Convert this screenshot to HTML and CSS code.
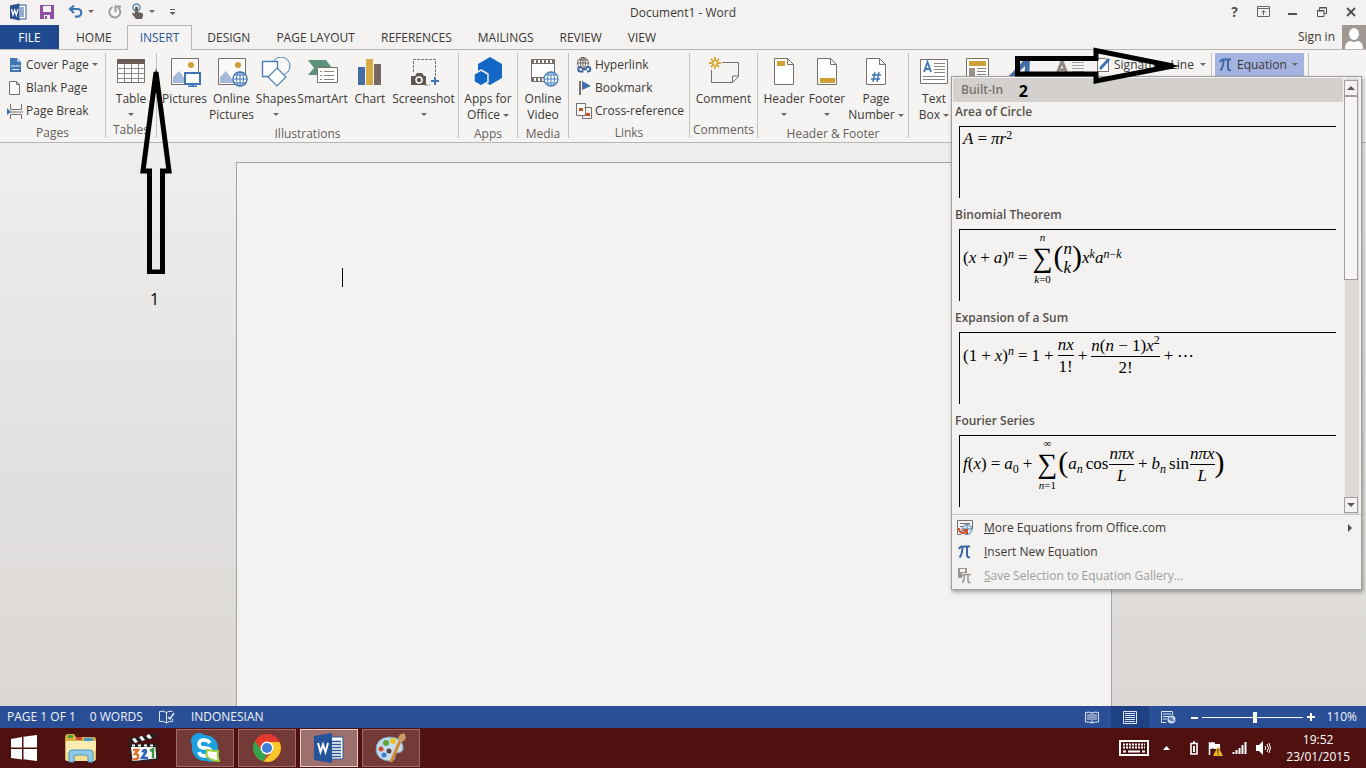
FILE: index.html
```html
<!DOCTYPE html>
<html lang="en">
<head>
  <meta charset="UTF-8" />
  <meta name="viewport" content="width=device-width, initial-scale=1.0" />
  <title>Document1 - Word</title>
  <link rel="stylesheet" href="styles.css">
</head>
<body>
  <header class="titlebar">
    <div class="quick">
      <svg class="word-logo" width="18" height="18" viewBox="0 0 18 18"><path d="M9 2h8v14H9z" fill="#fff" stroke="#2b579a"/><path d="M11 5h4M11 7h4M11 9h4M11 11h4M11 13h4" stroke="#2b579a"/><path d="M1 2.500 10.500.5v17L1 15.500z" fill="#2b4f8f"/><path d="M2.500 6 4 12l1.700-5L7.300 12 9 6" fill="none" stroke="#fff" stroke-width="1.300"/></svg>
      <button class="q-save" aria-label="Save"><svg width="14" height="14" viewBox="0 0 14 14"><path d="M0 0h14v14H0z" fill="#8d4fa0"/><path d="M3 1h8v6H3zM4 10h6v4H4z" fill="#f3f2f0"/><path d="M5 11h2v3H5z" fill="#8d4fa0"/></svg></button>
      <button class="q-undo" aria-label="Undo"><svg width="15" height="13" viewBox="0 0 15 13"><path d="M2 4h7.500a3.800 3.800 0 0 1 0 7.600H7M6 .5 2 4l4 4" fill="none" stroke="#3f74b5" stroke-width="2.200"/></svg><i class="caret"></i></button>
      <button class="q-redo" aria-label="Repeat"><svg width="14" height="14" viewBox="0 0 14 14"><path d="M4.500 2A5.500 5.500 0 1 0 10 2.500M7.500 7V1.500H13" fill="none" stroke="#9b9998" stroke-width="1.800"/></svg></button>
      <button class="q-touch" aria-label="Touch mode"><svg width="13" height="17" viewBox="0 0 13 17"><circle cx="5.500" cy="4.500" r="3.500" fill="none" stroke="#5b87b8" stroke-width="1.500"/><path d="M4 4.500q1.500-2 3 0V9l4 1q1.500.5 1 2.500l-1 3.500H5L1 11q.5-2 3-.5z" fill="#6b625e"/></svg><i class="caret"></i></button>
      <button class="q-more" aria-label="Customize"><svg width="7" height="6" viewBox="0 0 7 6"><path d="M1 .5h5" stroke="#5f5a57"/><path d="M.5 3h6l-3 3z" fill="#5f5a57"/></svg></button>
    </div>
    <h1>Document1 - Word</h1>
    <div class="window-buttons">
      <button class="help">?</button>
      <button aria-label="Ribbon display"><svg width="13" height="11" viewBox="0 0 13 11"><path d="M.5.500h12v10H.5zM.5 2.500h12M6.500 9V5M4.500 6.500l2-2 2 2" fill="none" stroke="#6b6663"/></svg></button>
      <button aria-label="Minimize"><svg width="9" height="11" viewBox="0 0 9 11"><path d="M0 8h9" stroke="#55504d" stroke-width="2"/></svg></button>
      <button aria-label="Restore"><svg width="10" height="10" viewBox="0 0 10 10"><path d="M2.500 3V.5h7v6H7M.5 3.500H7v6H.5zM.5 4h6.500M2.500 1h7" fill="none" stroke="#55504d"/></svg></button>
      <button aria-label="Close"><svg width="10" height="10" viewBox="0 0 10 10"><path d="m1 1 8 8M9 1 1 9" stroke="#55504d" stroke-width="1.800"/></svg></button>
    </div>
  </header>

  <nav class="tabs">
    <button class="file">FILE</button>
    <button>HOME</button>
    <button class="active">INSERT</button>
    <button>DESIGN</button>
    <button>PAGE LAYOUT</button>
    <button>REFERENCES</button>
    <button>MAILINGS</button>
    <button>REVIEW</button>
    <button>VIEW</button>
    <a class="sign-in" href="#">Sign in</a>
    <svg class="avatar" width="24" height="24" viewBox="0 0 24 24"><path d="M0 0h24v24H0z" fill="#a19894"/><ellipse cx="12" cy="9" rx="5" ry="6" fill="#fff"/><path d="M3 24q0-8 6-8 3 2 6 0 6 0 6 8z" fill="#fff"/></svg>
  </nav>

  <section class="ribbon">
    <div class="group pages">
      <div class="rows">
        <button><svg width="16" height="16" viewBox="0 0 16 16"><path d="M3 1h7l4 4v10H3z" fill="#3f74b5"/><path d="M10 1v4h4" fill="#a9c3e2"/><path d="m4 8 1.500 2L7 8l1.500 2L10 8l1.500 2L13 8M5 12.500h7" fill="none" stroke="#dbe7f4"/></svg>Cover Page<i class="caret"></i></button>
        <button><svg width="16" height="16" viewBox="0 0 16 16"><path d="M2.500 1.500h7l3 3v10h-10zM9.500 1.500v3h3" fill="#fff" stroke="#77706c"/></svg>Blank Page</button>
        <button><svg width="16" height="16" viewBox="0 0 16 16"><path d="M3.500 1v5.500h11V1M3.500 16v-4.500h11V16M3 9h13" fill="none" stroke="#77706c"/><path d="m0 5 4 4-4 3z" fill="#3f74b5"/></svg>Page Break</button>
      </div>
      <p>Pages</p>
    </div>

    <div class="group tables">
      <div class="tiles">
        <button><svg width="30" height="30" viewBox="0 0 30 30"><path d="M1.500 2.500h27v23h-27z" fill="#fff" stroke="#77706c"/><path d="M1 2h28v5H1z" fill="#6b5c57"/><path d="M1 11.500h28M1 16.500h28M1 21.500h28M8.500 7v18M15.500 7v18M22.500 7v18" stroke="#8b8480"/></svg><span>Table</span><i class="caret"></i></button>
      </div>
      <p>Tables</p>
    </div>

    <div class="group illustrations">
      <div class="tiles">
        <button><svg width="32" height="30" viewBox="0 0 32 30"><path d="M2.500 1.500h27v26h-27z" fill="#fbfaf9" stroke="#77706c"/><circle cx="22" cy="8" r="3" fill="#cf9f35"/><path d="M4 26v-6l6-6 9 12z" fill="#a6b8d8"/><path d="M16 16h15v11H16z" fill="#fff" stroke="#3f74b5" stroke-width="2"/><path d="M23.500 27v2M19 29.500h9" stroke="#3f74b5" stroke-width="2"/></svg><span>Pictures</span></button>
        <button><svg width="32" height="30" viewBox="0 0 32 30"><path d="M2.500 1.500h27v26h-27z" fill="#fbfaf9" stroke="#77706c"/><circle cx="22" cy="8" r="3" fill="#cf9f35"/><path d="M4 26v-6l6-6 9 12z" fill="#a6b8d8"/><circle cx="24" cy="22" r="7" fill="#fff" stroke="#3f74b5" stroke-width="1.400"/><path d="M17 22h14M24 15v14M18.500 18h11M18.500 26h11" stroke="#3f74b5"/><ellipse cx="24" cy="22" rx="3.500" ry="7" fill="none" stroke="#3f74b5"/></svg><span>Online</span><span>Pictures</span></button>
        <button><svg width="30" height="30" viewBox="0 0 30 30"><circle cx="20" cy="9" r="9" fill="#f8f7f6" stroke="#4d80b3"/><path d="M1.500 4.500h15v15h-15z" fill="#fff" stroke="#4d80b3" stroke-width="1.400"/><path d="m16 11 9 9-9 9-9-9z" fill="#fff" stroke="#4d80b3" stroke-width="1.200"/></svg><span>Shapes</span><i class="caret"></i></button>
        <button><svg width="30" height="30" viewBox="0 0 30 30"><path d="M0 3h18l6 8-6 7H0l6-7z" fill="#5b9279"/><path d="M9.500 10.500h20v15h-20z" fill="#fff" stroke="#77706c"/><path d="M12 14.500h2m2 0h10M12 18.500h2m2 0h10M12 22.500h2m2 0h10" stroke="#8b8480"/></svg><span>SmartArt</span></button>
        <button><svg width="30" height="30" viewBox="0 0 30 30"><path d="M3 10h7v18H3z" fill="#446da5"/><path d="M11 2h7v26h-7z" fill="#d9ab45"/><path d="M19 7h7v21h-7z" fill="#766762"/></svg><span>Chart</span></button>
        <button><svg width="32" height="30" viewBox="0 0 32 30"><path d="M5.500 15V2.500h22V19" fill="none" stroke="#77706c" stroke-dasharray="3 1"/><path d="M17 28h5" stroke="#77706c" stroke-dasharray="3 1"/><path d="M3 19h4l2-3h5l2 3h2v9H3z" fill="#5f5551"/><circle cx="11" cy="23" r="3" fill="none" stroke="#fff" stroke-width="1.500"/><path d="M23 24h8M27 20v8" stroke="#3f74b5" stroke-width="2"/></svg><span>Screenshot</span><i class="caret"></i></button>
      </div>
      <p>Illustrations</p>
    </div>

    <div class="group apps">
      <div class="tiles">
        <button><svg width="30" height="30" viewBox="0 0 30 30"><path d="m17 0 12 7v14l-12 7-12-7V7z" fill="#1368c5"/><path d="m8 13 7 4v8l-7 4-7-4v-8z" fill="#1368c5" stroke="#f5f4f3" stroke-width="1.500"/></svg><span>Apps for</span><span>Office<i class="caret"></i></span></button>
      </div>
      <p>Apps</p>
    </div>

    <div class="group media">
      <div class="tiles">
        <button><svg width="32" height="30" viewBox="0 0 32 30"><path d="M4.500 2.500h23v22h-23z" fill="#fff" stroke="#77706c"/><path d="M5 4.500h22M5 22.500h14" stroke="#77706c" stroke-width="3" stroke-dasharray="2 2"/><path d="M5 6.500h22M5 20.500h14" stroke="#77706c"/><circle cx="24" cy="22" r="7" fill="#fff" stroke="#4b83bd" stroke-width="1.400"/><path d="M17 22h14M24 15v14M18.500 18h11M18.500 26h11" stroke="#4b83bd"/><ellipse cx="24" cy="22" rx="3.500" ry="7" fill="none" stroke="#4b83bd"/></svg><span>Online</span><span>Video</span></button>
      </div>
      <p>Media</p>
    </div>

    <div class="group links">
      <div class="rows">
        <button><svg width="16" height="16" viewBox="0 0 16 16"><circle cx="7" cy="6" r="5.500" fill="#fff" stroke="#6b625e"/><path d="M1.500 6h11M7 .5v11M2.500 3h9" stroke="#6b625e"/><ellipse cx="7" cy="6" rx="2.500" ry="5.500" fill="none" stroke="#6b625e"/><path d="M5.500 10h-1a2.200 2.200 0 0 0 0 4.500h3M10 10h2a2.200 2.200 0 0 1 0 4.500h-1M6 12.300h5" stroke="#3b66a8" stroke-width="2" fill="none"/></svg>Hyperlink</button>
        <button><svg width="16" height="16" viewBox="0 0 16 16"><path d="M4 1v14" stroke="#77706c" stroke-width="2"/><path d="m6 1 9 5-9 4z" fill="#446da5"/></svg>Bookmark</button>
        <button><svg width="16" height="16" viewBox="0 0 16 16"><path d="M.5.500h9v12h-9z" fill="#fff" stroke="#77706c"/><path d="M10 4.500h5.500v11h-9V13M8.500 4.500h1" fill="none" stroke="#77706c"/><path d="M3 5h4v3H3zM10 10h4v3h-4z" fill="#c94f25"/></svg>Cross-reference</button>
      </div>
      <p>Links</p>
    </div>

    <div class="group comments">
      <div class="tiles">
        <button><svg width="32" height="30" viewBox="0 0 32 30"><path d="M14 5.500h16.500v14l-6 6h-21V13M30.500 19h-6v6" fill="none" stroke="#77706c"/><path d="M7 0v4m0 4v4M1 6h4m4 0h4M3 2l3 3m2 2 3 3m0-8L8 5M6 7l-3 3" stroke="#d9a636" stroke-width="1.800"/></svg><span>Comment</span></button>
      </div>
      <p>Comments</p>
    </div>

    <div class="group header-footer">
      <div class="tiles">
        <button><svg width="22" height="30" viewBox="0 0 22 30"><path d="M1.500 1.500h13l6 6v20h-19zM14.500 1.500v6h6" fill="#fff" stroke="#77706c"/><path d="M4 4h8v5H4z" fill="#cf9f35"/></svg><span>Header</span><i class="caret"></i></button>
        <button><svg width="22" height="30" viewBox="0 0 22 30"><path d="M1.500 1.500h13l6 6v20h-19zM14.500 1.500v6h6" fill="#fff" stroke="#77706c"/><path d="M4 21h15v5H4z" fill="#cf9f35"/></svg><span>Footer</span><i class="caret"></i></button>
        <button><svg width="22" height="30" viewBox="0 0 22 30"><path d="M1.500 1.500h13l6 6v20h-19zM14.500 1.500v6h6" fill="#fff" stroke="#77706c"/><path d="m10 15-2 10m6-10-2 10M7 18h9M6 22h9" stroke="#3f74b5" stroke-width="1.400"/></svg><span>Page</span><span>Number<i class="caret"></i></span></button>
      </div>
      <p>Header &amp; Footer</p>
    </div>

    <div class="group text">
      <div class="tiles">
        <button><svg width="30" height="30" viewBox="0 0 30 30"><path d="M1.500 2.500h27v24h-27z" fill="#fff" stroke="#77706c"/><path d="m5 15 3.500-10L12 15M6 12h5" fill="none" stroke="#3f74b5" stroke-width="1.800"/><path d="M15 6.500h11M15 9.500h11M15 12.500h11M15 15.500h11M4 19.500h22M4 22.500h22" stroke="#8b8480"/></svg><span>Text</span><span>Box<i class="caret"></i></span></button>
        <button aria-label="Quick Parts"><svg width="24" height="30" viewBox="0 0 24 30"><path d="M1.500 1.500h22v27h-22z" fill="#fff" stroke="#77706c"/><path d="M4 4h17v5H4z" fill="#cf9f35"/><path d="M4 11h6v8H4z" fill="#9b928e"/><path d="M12 11.500h9M12 14.500h9M12 17.500h9" stroke="#8b8480"/></svg></button>
        <button aria-label="WordArt"><svg width="24" height="30" viewBox="0 0 24 30"><path d="M0 20 17 2h5l-1 22h-5l1-15L6 20z" fill="#446da5"/></svg></button>
        <button aria-label="Drop Cap"><svg width="28" height="30" viewBox="0 0 28 30"><path d="M1 17 6 4l5 13M3 13h7" fill="none" stroke="#8f8784" stroke-width="3"/><path d="M16 5.500h12M16 8.500h12M16 11.500h12M16 14.500h12" stroke="#a8a29f"/></svg></button>
        <div class="rows">
          <button><svg width="16" height="16" viewBox="0 0 16 16"><path d="M2.500 1.500h8l3 3v10h-11z" fill="#fff" stroke="#77706c"/><path d="m5 12 9-10" stroke="#3f74b5" stroke-width="3"/></svg>Signature Line<i class="caret"></i></button>
        </div>
      </div>
    </div>

    <div class="group symbols">
      <div class="rows">
        <button class="open" aria-expanded="true"><svg width="13" height="14" viewBox="0 0 13 14"><path d="M1 4q1-2.500 3-2.500h8M4.500 2q0 7-3 10.500M9 2v8q0 3 3 2" fill="none" stroke="#3c68a8" stroke-width="2"/></svg>Equation<i class="caret"></i></button>
      </div>
    </div>
  </section>

  <main class="workspace">
    <div class="page"><span class="cursor"></span></div>
  </main>

  <footer class="status">
    <span class="st-page">PAGE 1 OF 1</span>
    <span class="st-words">0 WORDS</span>
    <svg class="st-proof" width="16" height="14" viewBox="0 0 16 14"><path d="M7.500 13V2.500q-3-2-7-1v10q4-1 7 1.500 2-2 6-1.500V9M7.500 2.500q2-2 6-1" fill="none" stroke="#dfe6f3"/><path d="m9 7 2 2 4-6" fill="none" stroke="#dfe6f3" stroke-width="1.500"/></svg>
    <span>INDONESIAN</span>
    <div class="views">
      <button aria-label="Read mode"><svg width="14" height="13" viewBox="0 0 14 13"><path d="M7 2v10M.5 1.500Q4 .5 7 2q3-1.500 6.500-.5v9.500Q10 10.500 7 12 4 10.500.5 11z" fill="none" stroke="#dfe6f3"/><path d="M2 4h4M2 6h4M2 8h4M8 4h4M8 6h4M8 8h4" stroke="#dfe6f3"/></svg></button>
      <button class="current" aria-label="Print layout"><svg width="14" height="13" viewBox="0 0 14 13"><path d="M.5.500h13v12H.5z" fill="none" stroke="#dfe6f3"/><path d="M2 2.500h10M2 4.500h10M2 6.500h10M2 8.500h10M2 10.500h10" stroke="#dfe6f3"/></svg></button>
      <button aria-label="Web layout"><svg width="15" height="13" viewBox="0 0 15 13"><path d="M5 11.500H.5V.500h11V4M2 3h8M2 5.500h6M2 8h4" fill="none" stroke="#dfe6f3"/><circle cx="10.500" cy="8.500" r="4" fill="#cbd6ea"/><path d="M8 7h3v2H9zM11 10l2-1" stroke="#2b579a" fill="none"/></svg></button>
    </div>
    <div class="zoom">
      <button aria-label="Zoom out"><svg width="7" height="7" viewBox="0 0 7 7"><path d="M0 4h7" stroke="#fff" stroke-width="2"/></svg></button>
      <input type="range" min="0" max="100" value="52" aria-label="Zoom">
      <button aria-label="Zoom in"><svg width="8" height="8" viewBox="0 0 8 8"><path d="M0 4h8M4 0v8" stroke="#fff" stroke-width="2"/></svg></button>
    </div>
    <span class="percent">110%</span>
  </footer>

  <div class="taskbar">
    <button class="start" aria-label="Start"><svg width="28" height="26" viewBox="0 0 28 26"><path d="m1 4 11-2v10.500H1zM13.500 1.800 27 0v12.500H13.500zM1 14h11v10.500L1 23zM13.500 14H27v12l-13.500-1.700z" fill="#fff"/></svg></button>
    <button aria-label="Explorer"><svg width="34" height="30" viewBox="0 0 34 30"><path d="M1 5q0-4 3-4h6l2 3h18q2 0 2 3v20H1z" fill="#d6b046"/><path d="M4 2h5v3H4z" fill="#4d9a3f"/><path d="M12 4h6v3h-6z" fill="#c8463a"/><path d="M20 5h9v3h-9z" fill="#4795c9"/><path d="M2 8h30l-1 20H2z" fill="#f3df8f"/><path d="M2 8h30l-.5 9L2 20z" fill="#f9ecb0"/><path d="M5 29V20q0-3 3-3h18q3 0 3 3v9h-5v-5q0-2-2-2H12q-2 0-2 2v5z" fill="#8fcbe8" stroke="#4d93bd"/></svg></button>
    <button aria-label="Media Player Classic"><svg width="30" height="30" viewBox="0 0 30 30"><path d="m1 6 26-6 1 5L2 11z" fill="#222"/><path d="m4 6 3 4 3-1-3-4zm7-2 3 4 3-1-3-4zm7-1 3 3 3-1-3-4z" fill="#fff"/><path d="m2 12 26-1 1 15-25 3z" fill="#fff" stroke="#222" stroke-width="1.500"/><path d="M2 11h26v3H3z" fill="#222"/><path d="M4 12.500h3m3 0h3m3 0h3m3 0h3" stroke="#fff" stroke-width="2"/><path d="M5 17h5l-3 4q4 0 3 4-2 2-5 1" fill="none" stroke="#e07027" stroke-width="2.500"/><path d="M14 19q4-4 4 0l-4 6h6" fill="none" stroke="#2c62b4" stroke-width="2.500"/><path d="m22 18 3-2v9" fill="none" stroke="#3b9440" stroke-width="2.500"/></svg></button>
    <button class="running" aria-label="Skype"><svg width="30" height="30" viewBox="0 0 30 30"><circle cx="9" cy="8" r="8" fill="#1ba1e2"/><circle cx="15" cy="15" r="13" fill="#1ba1e2"/><circle cx="21" cy="21" r="8" fill="#1ba1e2"/><path d="M20 10q-2-3-6-3-5 0-5 4t6 4 6 4-6 4q-5 0-6-4" fill="none" stroke="#fff" stroke-width="3.500"/><path d="M17 17q5 1 11 1-1 5 1 10-7 0-12-4-1-3 0-7z" fill="#fff" stroke="#9dcc3c" stroke-width="2"/></svg></button>
    <button class="running" aria-label="Chrome"><svg width="28" height="28" viewBox="0 0 28 28"><circle cx="14" cy="14" r="14" fill="#e23b2e"/><path d="M1.900 7 9 17.500l5 3L10.500 27.500A14 14 0 0 1 1.900 7z" fill="#35a34c"/><path d="M26.500 8H14l6 9-9.500 10.500A14 14 0 0 0 26.500 8z" fill="#f7c928"/><circle cx="14" cy="14" r="6.500" fill="#fff"/><circle cx="14" cy="14" r="5" fill="#3f7fd6"/></svg></button>
    <button class="running front" aria-label="Word"><svg width="30" height="30" viewBox="0 0 30 30"><path d="M16 4h13v22H16z" fill="#fff" stroke="#2b579a"/><path d="M18 8.500h9M18 11.500h9M18 14.500h9M18 17.500h9M18 20.500h9M18 23.500h9" stroke="#2b579a" stroke-width="1.500"/><path d="m0 3 18-3v30L0 27z" fill="#26529a"/><path d="m4 10 2.500 9L9 11.500l2.500 7.500L14 10" fill="none" stroke="#fff" stroke-width="2"/></svg></button>
    <button class="running" aria-label="Paint"><svg width="32" height="32" viewBox="0 0 32 32"><path d="M14 5q12 0 14 9 1 7-6 7-3 0-2 4 0 4-6 4Q2 28 1 18 1 6 14 5z" fill="#c3dcec" stroke="#7ba0bb"/><circle cx="11" cy="11" r="3" fill="#5aa53d"/><circle cx="18" cy="9" r="3" fill="#e9c12e"/><circle cx="6" cy="17" r="2.500" fill="#cf4936"/><circle cx="14" cy="19" r="2.500" fill="#5a4040"/><circle cx="9" cy="23" r="2.500" fill="#3d7cc9"/><path d="m16 30 9-21" stroke="#d9862b" stroke-width="3"/><path d="M23 9q-1-6 6-8l2 4q-1 5-6 5z" fill="#c99c6a"/></svg></button>
    <div class="tray">
      <svg class="keyboard" width="30" height="16" viewBox="0 0 30 16"><path d="M1 1h28v14H1z" fill="#4b1010" stroke="#fff" stroke-width="2"/><path d="M4 4.500h22M4 7.500h22" stroke="#fff" stroke-width="2" stroke-dasharray="2 1"/><path d="M4 11.500h3m2 0h12m2 0h3" stroke="#fff" stroke-width="2"/></svg>
      <svg class="show-hidden" width="7" height="4" viewBox="0 0 7 4"><path d="m0 4 3.500-4L7 4z" fill="#fff"/></svg>
      <svg class="battery" width="8" height="14" viewBox="0 0 8 14"><path d="M1 2.500h6V13H1zM3 1h2" fill="none" stroke="#fff" stroke-width="1.600"/><path d="M3 5h2v6H3z" fill="#fff"/></svg>
      <svg class="flag" width="15" height="15" viewBox="0 0 15 15"><path d="M1.500 1v13" stroke="#fff" stroke-width="1.500"/><path d="M2 2q3-2 5 0v6q-2-1-5 0zM7 3h5v5H7z" fill="#fff"/><path d="m10 5 5 10H5z" fill="#f0b51e"/><path d="M10 8v4m0 1v1" stroke="#222"/></svg>
      <svg class="signal" width="15" height="12" viewBox="0 0 15 12"><path d="M1.500 12v-2m3 2V8m3 4V6m3 6V3m3 9V0" stroke="#fff" stroke-width="2"/></svg>
      <svg class="volume" width="15" height="14" viewBox="0 0 15 14"><path d="M0 4h3l4-4v14l-4-4H0z" fill="#fff"/><path d="M9 5q1.500 2 0 4M11 3q3 4 0 8M13 2q3 5 0 10" fill="none" stroke="#fff"/></svg>
      <div class="clock"><time>19:52</time><time>23/01/2015</time></div>
    </div>
  </div>

  <!-- equation gallery dropdown -->
  <div class="menu">
    <div class="gallery">
      <div class="list">
        <h2>Built-In</h2>
        <button class="equation">
          <strong>Area of Circle</strong>
          <span class="preview"><span class="math"><var>A</var><b class="op">=</b><var>πr</var><sup>2</sup></span></span>
        </button>
        <button class="equation">
          <strong>Binomial Theorem</strong>
          <span class="preview"><span class="math">(<var>x</var><b class="op">+</b><var>a</var>)<sup><var>n</var></sup><b class="op">=</b><span class="sum"><var>n</var><b>∑</b><span><var>k</var>=0</span></span><span class="tall">(</span><span class="stack"><var>n</var><var>k</var></span><span class="tall">)</span><var>x</var><sup><var>k</var></sup><var>a</var><sup><var>n</var>−<var>k</var></sup></span></span>
        </button>
        <button class="equation">
          <strong>Expansion of a Sum</strong>
          <span class="preview"><span class="math">(1<b class="op">+</b><var>x</var>)<sup><var>n</var></sup><b class="op">=</b>1<b class="op">+</b><span class="frac"><var>nx</var><span>1!</span></span><b class="op">+</b><span class="frac"><span><var>n</var>(<var>n</var> − 1)<var>x</var><sup>2</sup></span><span>2!</span></span><b class="op">+</b>⋯</span></span>
        </button>
        <button class="equation">
          <strong>Fourier Series</strong>
          <span class="preview"><span class="math"><var>f</var>(<var>x</var>)<b class="op">=</b><var>a</var><sub>0</sub><b class="op">+</b><span class="sum"><span>∞</span><b>∑</b><span><var>n</var>=1</span></span><span class="tall">(</span><var>a</var><sub><var>n</var></sub><span class="fn">cos</span><span class="frac"><var>nπx</var><var>L</var></span><b class="op">+</b><var>b</var><sub><var>n</var></sub><span class="fn">sin</span><span class="frac"><var>nπx</var><var>L</var></span><span class="tall">)</span></span></span>
        </button>
      </div>
      <div class="scroll">
        <button class="arrow up" aria-label="Scroll up"></button>
        <div class="thumb"></div>
        <button class="arrow down" aria-label="Scroll down"></button>
      </div>
    </div>
    <div class="commands">
      <button><svg width="16" height="16" viewBox="0 0 16 16"><path d="M.5 14V.500h15V9M.5 14.500H4M3 3.500h10M3 6.500h4" fill="none" stroke="#77706c"/><circle cx="10" cy="9.500" r="5" fill="#dbe5f2" stroke="#4b83bd"/><path d="M10 4.500v10M5 9h10" stroke="#4b83bd"/><path d="M2 8q0 5 5 5l3-3m-4 0 4 0v4" fill="none" stroke="#d2502c" stroke-width="2"/></svg><span><u>M</u>ore Equations from Office.com</span><i class="sub"></i></button>
      <button><svg width="16" height="16" viewBox="0 0 16 16"><path d="M2 5q1-2.500 3-2.500h8M5.500 3q0 7-3 10.500M10 3v8q0 3 3 2" fill="none" stroke="#3c68a8" stroke-width="2"/></svg><span><u>I</u>nsert New Equation</span></button>
      <button disabled><svg width="16" height="16" viewBox="0 0 16 16"><path d="M1 0h9v5H5v5H1z" fill="#9b9592"/><path d="M3 1h5v3H3z" fill="#f3f2f0"/><path d="M5 8q1-1.500 2-1.500h7M7.500 7q0 5-2 8M11 7v6q0 2 2.500 1.500" fill="none" stroke="#9b9592" stroke-width="1.500"/></svg><span><u>S</u>ave Selection to Equation Gallery...</span></button>
    </div>
  </div>

  <!-- tutorial marks -->
  <svg class="mark mark-insert" width="34" height="208" viewBox="0 0 34 208"><path d="M17 6 4 105h6.500v101h13V105H30z" fill="none" stroke="#000" stroke-width="5"/><path d="M17 2 13 27h8z"/></svg>
  <span class="mark step-one">1</span>
  <svg class="mark mark-equation" width="172" height="38" viewBox="0 0 172 38"><path d="M4.500 11.500H83v-8L160 19 83 34v-7H4.500z" fill="none" stroke="#000" stroke-width="5"/><path d="m142 14 25 5-25 5z"/></svg>
  <span class="mark step-two">2</span>
</body>
</html>
```
FILE: styles.css
```css
* {
  box-sizing: border-box;
}
body {
  margin: 0;
  min-height: 100vh;
  display: flex;
  flex-direction: column;
  position: relative;
  overflow: hidden;
  font: 12px/16px 'Open Sans', 'Noto Sans', sans-serif;
  color: #3b3836;
  background: #f3f2f0;
}
button {
  border: 0;
  padding: 0;
  background: none;
  font: inherit;
  color: inherit;
}
svg {
  display: block;
  flex: none;
}
h1, h2, p {
  margin: 0;
  font-size: 12px;
  font-weight: normal;
}
.caret {
  display: inline-block;
  flex: none;
  border: 3px solid transparent;
  border-top-color: #6b6663;
  border-bottom: 0;
}

/* title bar */
.titlebar {
  display: grid;
  grid-template-columns: 1fr auto 1fr;
  align-items: center;
  height: 25px;
}
.quick {
  display: flex;
  align-items: center;
  height: 22px;
  padding-left: 9px;
  margin-bottom: 2px;
}
.quick button {
  display: flex;
  align-items: center;
  gap: 5px;
}
.q-save {
  margin-left: 13px;
}
.q-undo {
  margin-left: 14px;
}
.q-redo {
  margin-left: 14px;
}
.q-touch {
  margin-left: 9px;
}
.q-more {
  margin-left: 14px;
}
.window-buttons {
  display: flex;
  justify-content: flex-end;
  height: 22px;
  padding-right: 1px;
  margin-bottom: 2px;
}
.window-buttons button {
  width: 29px;
  display: flex;
  align-items: center;
  justify-content: center;
}
.window-buttons .help {
  font-size: 14px;
  font-weight: bold;
  color: #55504d;
}

/* tabs */
.tabs {
  display: flex;
  height: 25px;
  border-bottom: 1px solid #b9b5b2;
}
.tabs button {
  padding: 0 12px;
  border: 1px solid transparent;
  border-bottom: 0;
}
.tabs .file {
  width: 59px;
  margin-right: 4px;
  background: #204a8f;
  color: #fff;
}
.tabs .active {
  height: 25px;
  margin: 0 2px;
  background: #f5f4f3;
  border-color: #b9b5b2;
  color: #2b579a;
}
.sign-in {
  margin: 4px 7px 0 auto;
  color: inherit;
  text-decoration: none;
}

/* ribbon */
.ribbon {
  display: flex;
  height: 93px;
  background: #f5f4f3;
  border-bottom: 1px solid #b9b5b2;
}
.group {
  flex: none;
  display: flex;
  flex-direction: column;
  margin: 3px 0 4px;
  border-right: 1px solid #c5c1be;
}
.group p {
  padding-top: 3px;
  text-align: center;
  color: #66605c;
}
.rows {
  display: grid;
  grid-auto-rows: 23px;
  height: 73px;
}
.rows button {
  display: flex;
  align-items: center;
  gap: 3px;
  white-space: nowrap;
}
.tiles {
  display: grid;
  justify-content: center;
  height: 73px;
}
.tiles > button {
  display: flex;
  flex-direction: column;
  align-items: center;
  padding-top: 4px;
  white-space: nowrap;
}
.tiles > button > svg {
  margin-bottom: 4px;
}
.tiles > button > .caret {
  margin-top: 6px;
}
.tiles span {
  display: flex;
  align-items: center;
  gap: 3px;
}
.pages {
  width: 106px;
}
.pages .rows {
  padding-left: 7px;
}
.tables {
  width: 51px;
}
.illustrations {
  width: 302px;
}
.illustrations .tiles {
  grid-template-columns: 48px 46px 43px 50px 45px 62px;
}
.apps {
  width: 59px;
}
.media {
  width: 51px;
}
.links {
  width: 121px;
}
.links .rows {
  padding-left: 7px;
}
.comments {
  width: 68px;
}
.header-footer {
  width: 151px;
}
.header-footer .tiles {
  grid-template-columns: 44px 42px 56px;
}
.text {
  width: 303px;
}
.text .tiles {
  grid-template-columns: 50px 36px 50px 50px 1fr;
}
.text .rows .caret {
  margin-left: 3px;
}
.symbols {
  width: 97px;
}
.symbols .rows {
  padding: 0 4px 0 3px;
}
.symbols .open {
  gap: 5px;
  padding-left: 4px;
  background: #a4b3e0;
}

/* document */
.workspace {
  flex: 1;
  display: flex;
  justify-content: center;
  padding: 19px 18px 0 0;
  background: linear-gradient(#efeeec, #dad7d5);
}
.page {
  flex: 0 1 876px;
  padding: 105px;
  background: #f3f2f1;
  border: 1px solid #a9a5a2;
  border-bottom: 0;
}
.cursor {
  display: block;
  width: 1px;
  height: 19px;
  background: #000;
}

/* status bar */
.status {
  display: flex;
  align-items: center;
  height: 22px;
  padding: 0 9px 0 7px;
  background: #2b4f97;
  color: #f0f3f9;
}
.st-page {
  margin-right: 14px;
}
.st-words {
  margin-right: 16px;
}
.st-proof {
  margin-right: 16px;
}
.views {
  display: flex;
  margin-left: auto;
}
.views button {
  width: 38px;
  height: 22px;
  display: flex;
  align-items: center;
  justify-content: center;
}
.views .current {
  background: #1d4182;
}
.zoom {
  display: flex;
  align-items: center;
  gap: 4px;
  margin: 0 11px 0 4px;
}
.zoom input {
  appearance: none;
  width: 101px;
  height: 12px;
  margin: 0;
  background: linear-gradient(#fff, #fff) center / 100% 1px no-repeat;
}
.zoom input::-webkit-slider-thumb {
  appearance: none;
  width: 4px;
  height: 11px;
  background: #fff;
}

/* taskbar */
.taskbar {
  display: flex;
  align-items: center;
  gap: 4px;
  height: 40px;
  background: #4f1110;
  color: #fff;
}
.taskbar button {
  width: 58px;
  height: 38px;
  display: flex;
  align-items: center;
  justify-content: center;
}
.taskbar .start {
  width: 48px;
}
.taskbar .running {
  background: #743a38;
  border: 1px solid #9b6b69;
}
.taskbar .front {
  background: #9d706e;
  border-color: #e3d0cf;
}
.tray {
  display: flex;
  align-items: center;
  margin-left: auto;
  padding-right: 16px;
}
.show-hidden {
  margin: 0 20px 0 14px;
}
.flag {
  margin: 0 9px 0 10px;
}
.volume {
  margin: 0 15px 0 9px;
}
.clock {
  display: flex;
  flex-direction: column;
  align-items: center;
  line-height: 17px;
}

/* equation menu */
.menu {
  position: absolute;
  top: 76px;
  right: 4px;
  width: 411px;
  background: #f3f2f0;
  border: 1px solid #a39e9b;
  box-shadow: 1px 2px 4px rgba(0, 0, 0, 0.35);
}
.menu button {
  text-align: left;
}
.gallery {
  display: flex;
  padding: 1px 1px 0;
  border-bottom: 1px solid #c9c6c3;
}
.list {
  flex: 1;
}
.list h2 {
  height: 24px;
  padding-left: 8px;
  line-height: 24px;
  font-weight: 600;
  color: #78726e;
  background: #d4d0cd;
}
.equation {
  display: block;
  width: 100%;
  height: 103px;
  padding: 0 7px 7px 6px;
}
.equation strong {
  display: block;
  height: 24px;
  margin-left: -4px;
  line-height: 20px;
  font-weight: 600;
  color: #55504c;
}
.preview {
  display: block;
  height: 72px;
  padding: 1px 0 0 3px;
  border: 1px solid #000;
  border-width: 1px 0 0 1px;
}
.math {
  display: flex;
  align-items: center;
  font: 17px/22px 'Liberation Serif', serif;
  color: #000;
}
.math b {
  font-weight: normal;
}
.math .op {
  margin: 0 4px;
}
.math sup, .math sub {
  font-size: 12px;
  line-height: 12px;
}
.math sup {
  padding-bottom: 9px;
}
.math sub {
  padding-top: 9px;
}
.sum {
  display: flex;
  flex-direction: column;
  align-items: center;
  margin: 0 1px;
  font-size: 11px;
  line-height: 12px;
}
.sum b {
  font-size: 28px;
  line-height: 30px;
}
.tall {
  font-size: 30px;
  line-height: 32px;
  padding-bottom: 5px;
}
.stack {
  display: flex;
  flex-direction: column;
  line-height: 19px;
}
.frac {
  display: flex;
  flex-direction: column;
  align-items: center;
  line-height: 21px;
}
.frac > :first-child {
  border-bottom: 1px solid #000;
}
.frac sup {
  padding: 0;
}
.fn {
  margin: 0 1px 0 3px;
}
.scroll {
  display: flex;
  flex-direction: column;
  width: 17px;
  padding: 2px 2px 1px 1px;
  background: linear-gradient(#dcd9d7, #dcd9d7) center / 14px 100% no-repeat;
}
.arrow {
  display: flex;
  align-items: center;
  justify-content: center;
  height: 16px;
}
.menu .arrow {
  background: #f3f2f0;
  border: 1px solid #a39e9b;
}
.arrow::before {
  content: '';
  border: 4px solid transparent;
}
.arrow.up::before {
  border-top: 0;
  border-bottom-color: #5f5a57;
}
.arrow.down {
  margin-top: auto;
}
.arrow.down::before {
  border-bottom: 0;
  border-top-color: #5f5a57;
}
.thumb {
  height: 184px;
  background: #f7f6f5;
  border: 1px solid #a39e9b;
}
.commands {
  padding: 1px 5px;
}
.commands button {
  display: flex;
  align-items: center;
  gap: 11px;
  width: 100%;
  height: 24px;
}
.commands button:disabled {
  color: #a19d9a;
}
.sub {
  margin: 0 4px 0 auto;
  border: 4px solid transparent;
  border-left-color: #55504d;
  border-right: 0;
}

/* arrows and numbers drawn over the window */
.mark {
  position: absolute;
  color: #000;
  font-size: 16px;
  line-height: 20px;
}
.mark-insert {
  top: 66px;
  left: 139px;
}
.step-one {
  top: 289px;
  left: 150px;
}
.mark-equation {
  top: 47px;
  right: 181px;
}
.step-two {
  top: 81px;
  right: 338px;
  font-weight: bold;
}
```
